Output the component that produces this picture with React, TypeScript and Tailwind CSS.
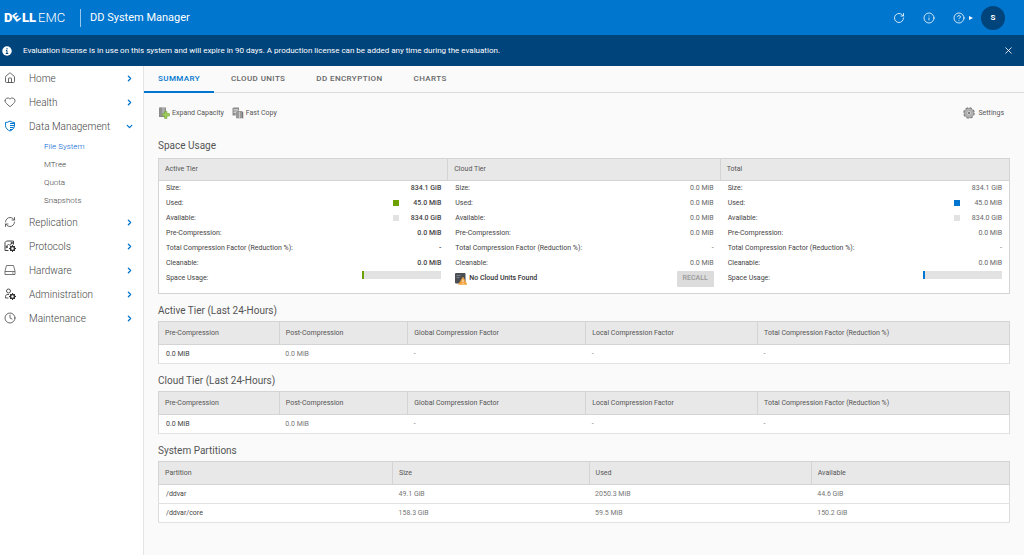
import type { ReactNode } from "react";
import clsx from "clsx";
import { ChevronDown, ChevronRight, CircleHelp, Clock, Heart, House, Info, RefreshCw, RotateCw, X } from "lucide-react";

const DellLogo = () => (
  <svg className="h-4 w-[63px] overflow-visible" viewBox="0 0 63 16" fill="#fff" role="img" aria-label="Dell EMC">
    <text x="0" y="12" fontSize="13" fontWeight="900">D</text>
    <text x="9" y="11" fontSize="11" fontWeight="900" transform="rotate(-38 12.500 7)">E</text>
    <text x="18" y="12" fontSize="13" fontWeight="900">L</text>
    <text x="25" y="12" fontSize="13" fontWeight="900">L</text>
    <text x="34" y="12" fontSize="13" fontWeight="300">EMC</text>
  </svg>
);

const ShieldIcon = () => (
  <svg className="size-3" viewBox="0 0 24 24" fill="none" stroke="#0076ce" strokeWidth="2">
    <path d="M12 2C9 4 6 5 3 5v6c0 5 4 9 9 11" />
    <path d="M12 2c3 2 6 3 9 3v6c0 5-4 9-9 11" />
    <path d="M12 7h9M12 11h9M12 15h7M12 19h4" strokeWidth="2.4" />
  </svg>
);

const Gear = () => (
  <g>
    <circle cx="17" cy="17" r="4" fill="none" stroke="#333" strokeWidth="3" />
    <path
      d="M17 10v3M17 21v3M10 17h3M21 17h3M12 12l2 2M20 20l2 2M22 12l-2 2M14 20l-2 2"
      stroke="#333"
      strokeWidth="2"
    />
  </g>
);

const ProtocolsIcon = () => (
  <svg className="size-3" viewBox="0 0 24 24" fill="none" stroke="#444" strokeWidth="2">
    <path d="M9 21H2V5l3-3h14v7" />
    <path d="M5 13l4-5 3 3 4-6" strokeWidth="1.6" />
    <circle cx="5.500" cy="14" r="1.500" fill="#444" />
    <circle cx="15.500" cy="6" r="1.500" fill="#444" />
    <Gear />
  </svg>
);

const HardwareIcon = () => (
  <svg className="size-3" viewBox="0 0 24 24" fill="none" stroke="#555" strokeWidth="1.600">
    <path d="M2 14L5 3h14l3 11v7H2zM2 15h20" />
    <path d="M16 18h3" />
  </svg>
);

const AdminIcon = () => (
  <svg className="size-3" viewBox="0 0 24 24" fill="none" stroke="#444" strokeWidth="1.800">
    <circle cx="9" cy="6" r="4" />
    <path d="M9 20H3v-3c0-3 2-4 5-4h2" />
    <Gear />
  </svg>
);

const ExpandIcon = () => (
  <svg className="size-3" viewBox="0 0 24 24">
    <path d="M2 1h14v19H2z" fill="#8a8a8a" />
    <path d="M4 4h10M4 8h10M4 12h8M4 16h6" stroke="#e4e4e4" strokeWidth="1.500" />
    <path d="M6 1v18" stroke="#666" strokeWidth="1.500" />
    <path d="M13 9h5v4h5v5h-5v5h-5v-5H9v-5h4z" fill="#9ccc5a" stroke="#6c9a35" />
  </svg>
);

const CopyIcon = () => (
  <svg className="size-3" viewBox="0 0 24 24">
    <path d="M1 3l2-2h11v16H1z" fill="#8c8c8c" />
    <path d="M3 5h9M3 8h9M3 11h5" stroke="#ddd" strokeWidth="1.500" />
    <path d="M8 8h12l3 2v13H8z" fill="#777" stroke="#fafafa" />
    <path d="M10 12h10M10 16h10M10 20h10M15 10v12" stroke="#d6d6d6" strokeWidth="1.500" />
  </svg>
);

const SettingsIcon = () => (
  <svg className="size-3" viewBox="0 0 24 24">
    <circle cx="12" cy="12" r="10" fill="#aaa" stroke="#777" strokeWidth="3" strokeDasharray="4.5 3.350" />
    <circle cx="12" cy="12" r="9.500" fill="#b4b4b4" stroke="#858585" />
    <circle cx="12" cy="12" r="5" fill="#d0d0d0" stroke="#8c8c8c" />
    <circle cx="12" cy="12" r="2" fill="#666" />
  </svg>
);

const CloudWarningIcon = () => (
  <svg className="size-3" viewBox="0 0 24 24">
    <rect width="21" height="21" rx="2" fill="#4b4f54" />
    <path d="M3 5h8M3 9h6" stroke="#7b8087" strokeWidth="2" />
    <path d="M16 8l8 15H7z" fill="#f2a33a" stroke="#f2a33a" strokeLinejoin="round" />
    <path d="M16 13v5M16 19.500v2" stroke="#fff" strokeWidth="1.800" />
  </svg>
);

const lineIcon = { size: 12, strokeWidth: 1.6, color: "#444" };
const chevron = { size: 9, strokeWidth: 3.5, color: "#0076ce" };

type NavItem = { label: string; icon: ReactNode; children?: string[] };

const navItems: NavItem[] = [
  { label: "Home", icon: <House {...lineIcon} /> },
  { label: "Health", icon: <Heart {...lineIcon} /> },
  { label: "Data Management", icon: <ShieldIcon />, children: ["File System", "MTree", "Quota", "Snapshots"] },
  { label: "Replication", icon: <RefreshCw {...lineIcon} /> },
  { label: "Protocols", icon: <ProtocolsIcon /> },
  { label: "Hardware", icon: <HardwareIcon /> },
  { label: "Administration", icon: <AdminIcon /> },
  { label: "Maintenance", icon: <Clock {...lineIcon} /> },
];

const tabs = ["SUMMARY", "CLOUD UNITS", "DD ENCRYPTION", "CHARTS"];

const Header = () => (
  <header className="flex h-[35px] items-center bg-[#0076ce] pl-1 pr-[19px] text-white">
    <DellLogo />
    <h1 className="ml-[13px] border-l border-white/60 pl-[9px] text-[11px] leading-[18px]">DD System Manager</h1>
    <div className="ml-auto flex items-center">
      <button aria-label="Refresh" className="mr-[18px]">
        <RotateCw size={12} strokeWidth={1.6} />
      </button>
      <button aria-label="About" className="mr-[18px]">
        <Info size={12} strokeWidth={1.6} />
      </button>
      <button aria-label="Help" className="mr-2 flex items-center gap-1">
        <CircleHelp size={12} strokeWidth={1.6} />
        <svg className="h-1 w-1" viewBox="0 0 4 4" fill="#fff">
          <path d="M0 0l4 2-4 2z" />
        </svg>
      </button>
      <button className="size-6 rounded-full bg-[#00447c] text-[8px] font-bold">S</button>
    </div>
  </header>
);

const Banner = () => (
  <div className="flex h-[31px] items-center bg-[#00447c] pl-[2px] pr-[10px] text-white">
    <svg className="size-[10px]" viewBox="0 0 20 20">
      <circle cx="10" cy="10" r="9.500" fill="#fff" />
      <path d="M10 4v3M8 9h2v6M7.500 15h5" stroke="#00447c" strokeWidth="2" fill="none" />
    </svg>
    <p className="ml-[11px] text-[8px]">
      Evaluation license is in use on this system and will expire in 90 days. A production license can be added any
      time during the evaluation.
    </p>
    <button aria-label="Close" className="ml-auto">
      <X size={11} strokeWidth={1.8} />
    </button>
  </div>
);

const Sidebar = () => (
  <nav className="w-36 shrink-0 border-r border-[#e4e4e4] bg-white text-[#444]">
    <ul>
      {navItems.map(({ label, icon, children }) => (
        <li key={label}>
          <a href="#" className="flex h-6 items-center pl-1 pr-[9px] text-[10px] font-light">
            {icon}
            <span className="ml-[13px] grow">{label}</span>
            {children ? <ChevronDown {...chevron} /> : <ChevronRight {...chevron} />}
          </a>
          {children && (
            <ul className="pl-11 text-[8px] font-light">
              {children.map((child, i) => (
                <li key={child}>
                  <a href="#" className={clsx("block leading-[18px]", i === 0 && "text-[#0063d1]")}>
                    {child}
                  </a>
                </li>
              ))}
            </ul>
          )}
        </li>
      ))}
    </ul>
  </nav>
);

type Panel = { name: string; swatch?: string; values: string[]; strong?: boolean };

const panels: Panel[] = [
  {
    name: "Active Tier",
    swatch: "bg-[#6ea204]",
    values: ["834.1 GiB", "45.0 MiB", "834.0 GiB", "0.0 MiB", "-", "0.0 MiB"],
    strong: true,
  },
  { name: "Cloud Tier", values: ["0.0 MiB", "0.0 MiB", "0.0 MiB", "0.0 MiB", "-", "0.0 MiB"] },
  {
    name: "Total",
    swatch: "bg-[#0076ce]",
    values: ["834.1 GiB", "45.0 MiB", "834.0 GiB", "0.0 MiB", "-", "0.0 MiB"],
  },
];

const rowLabels = [
  "Size:",
  "Used:",
  "Available:",
  "Pre-Compression:",
  "Total Compression Factor (Reduction %):",
  "Cleanable:",
];

const SpacePanel = ({ name, swatch, values, strong }: Panel) => (
  <section className="group">
    <h3 className="flex h-[22px] items-center border-b border-r border-[#d4d4d4] bg-[#e8e8e8] pl-[6px] text-[7px] group-last:border-r-0">
      {name}
    </h3>
    <div className="pb-[7px] pl-[7px] pr-[7px] text-[7px]">
      <table className="w-full text-[#444]">
        <tbody>
          {rowLabels.map((label, i) => (
            <tr key={label} className="h-[15px]">
              <th scope="row" className="p-0 text-left font-normal">
                {label}
              </th>
              <td className="w-[7px] p-0 pb-[2px]">
                {swatch && i === 1 && <div className={clsx("size-[6px]", swatch)} />}
                {swatch && i === 2 && <div className="size-[6px] bg-[#e2e2e2]" />}
              </td>
              <td className={clsx("w-[41px] p-0 text-right", strong ? "font-medium" : "text-[#666]")}>{values[i]}</td>
            </tr>
          ))}
        </tbody>
      </table>
      {swatch ? (
        <div className="flex h-[15px] justify-between leading-[15px] text-[#444]">
          <span>Space Usage:</span>
          <div className="h-2 w-[79px] bg-[#e2e2e2]">
            <div className={clsx("h-full w-0.5", swatch)} />
          </div>
        </div>
      ) : (
        <div className="flex h-[15px] items-center text-[#333]">
          <CloudWarningIcon />
          <span className="ml-[2px] grow font-medium">No Cloud Units Found</span>
          <button disabled className="h-4 w-[37px] shrink-0 rounded-[1px] bg-[#dcdcdc] font-medium text-[#999]">
            RECALL
          </button>
        </div>
      )}
    </div>
  </section>
);

type DataTableProps = { title: string; columns: string[]; widths: string[]; rows: string[][] };

const DataTable = ({ title, columns, widths, rows }: DataTableProps) => (
  <section>
    <h2 className="mt-[6px] text-[10px] leading-[21px]">{title}</h2>
    <table className="w-full table-fixed border-collapse border border-[#dcdcdc] bg-white text-left text-[7px]">
      <thead>
        <tr className="h-[23px] bg-[#e8e8e8]">
          {columns.map((column, i) => (
            <th key={column} className={clsx("border border-[#d4d4d4] p-0 pl-[6px] font-normal", widths[i])}>
              {column}
            </th>
          ))}
        </tr>
      </thead>
      <tbody>
        {rows.map((row) => (
          <tr key={row[0]} className="h-[19px] border-b border-[#e2e2e2] text-[#777]">
            {row.map((cell, i) => (
              <td key={i} className="p-0 pl-[6px] first:pl-[7px] first:text-[#444]">
                {cell}
              </td>
            ))}
          </tr>
        ))}
      </tbody>
    </table>
  </section>
);

const compressionTable = {
  columns: [
    "Pre-Compression",
    "Post-Compression",
    "Global Compression Factor",
    "Local Compression Factor",
    "Total Compression Factor (Reduction %)",
  ],
  widths: ["w-[14.2%]", "w-[15.1%]", "w-[20.9%]", "w-[20.2%]", "w-[29.6%]"],
  rows: [["0.0 MiB", "0.0 MiB", "-", "-", "-"]],
};

const partitionTable = {
  columns: ["Partition", "Size", "Used", "Available"],
  widths: ["w-[27.5%]", "w-[23.1%]", "w-[26.1%]", "w-[23.3%]"],
  rows: [
    ["/ddvar", "49.1 GiB", "2050.3 MiB", "44.6 GiB"],
    ["/ddvar/core", "158.3 GiB", "59.5 MiB", "150.2 GiB"],
  ],
};

const Main = () => (
  <main className="min-w-0 grow bg-[#fafafa] text-[#555]">
    <div role="tablist" className="flex h-[27px] gap-[3px] border-b border-[#dcdcdc]">
      {tabs.map((tab, i) => (
        <button
          key={tab}
          role="tab"
          aria-selected={i === 0}
          className={clsx(
            "h-[27px] border-b-2 px-[14px] text-[8px] font-medium tracking-wider",
            i === 0 ? "border-[#0076ce] text-[#0076ce]" : "border-transparent text-[#666]"
          )}
        >
          {tab}
        </button>
      ))}
    </div>
    <div className="px-[14px] pt-[14px]">
      <div className="flex h-3 items-center text-[7px]">
        <button className="flex items-center gap-[2px]">
          <ExpandIcon />
          Expand Capacity
        </button>
        <button className="ml-2 flex items-center gap-[2px]">
          <CopyIcon />
          Fast Copy
        </button>
        <button className="ml-auto mr-[6px] flex items-center gap-[3px]">
          <SettingsIcon />
          Settings
        </button>
      </div>
      <h2 className="mt-4 text-[10px] leading-[22px]">Space Usage</h2>
      <div className="my-px grid grid-cols-[290fr_273fr_289fr] border border-[#d4d4d4] bg-white">
        {panels.map((panel) => (
          <SpacePanel key={panel.name} {...panel} />
        ))}
      </div>
      <DataTable title="Active Tier (Last 24-Hours)" {...compressionTable} />
      <DataTable title="Cloud Tier (Last 24-Hours)" {...compressionTable} />
      <DataTable title="System Partitions" {...partitionTable} />
    </div>
  </main>
);

export default function App() {
  return (
    <div className="flex min-h-screen flex-col font-[Roboto,sans-serif]">
      <Header />
      <Banner />
      <div className="flex grow">
        <Sidebar />
        <Main />
      </div>
    </div>
  );
}
